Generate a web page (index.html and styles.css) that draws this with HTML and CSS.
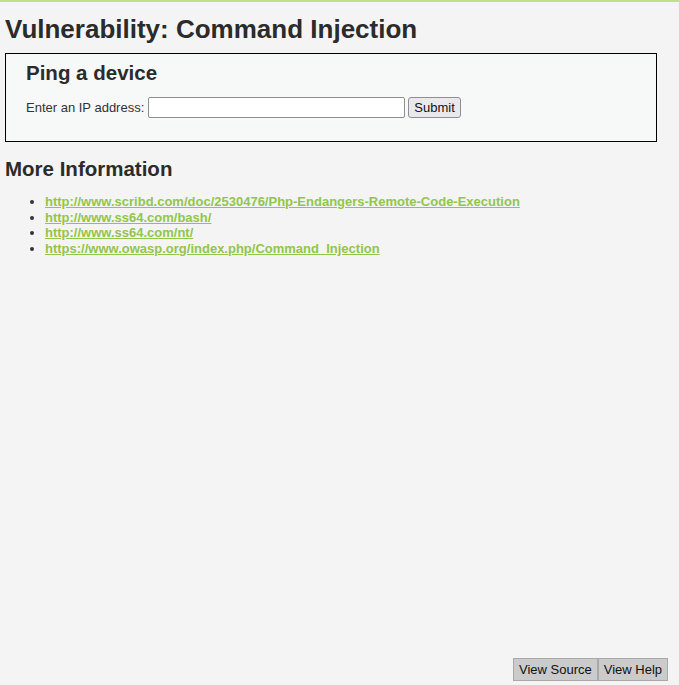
FILE: index.html
```html
<!DOCTYPE html>
<html>
<head>
<meta charset="utf-8">
<link rel="stylesheet" href="styles.css">
</head>
<body>
<div class="topbar"></div>
<div class="page">
  <h1 class="title">Vulnerability: Command Injection</h1>
  <div class="vulnerable_code_area">
    <h2 class="box-title">Ping a device</h2>
    <form class="ping-form">
      <label class="lbl">Enter an IP address:</label>
      <input class="ip-input" type="text" name="ip">
      <button class="submit-btn" type="button">Submit</button>
    </form>
  </div>
  <h2 class="more-title">More Information</h2>
  <ul class="links">
    <li><a href="#">http://www.scribd.com/doc/2530476/Php-Endangers-Remote-Code-Execution</a></li>
    <li><a href="#">http://www.ss64.com/bash/</a></li>
    <li><a href="#">http://www.ss64.com/nt/</a></li>
    <li><a href="#">https://www.owasp.org/index.php/Command_Injection</a></li>
  </ul>
</div>
<div class="footer-buttons">
  <button class="popup-btn" type="button">View Source</button><button class="popup-btn" type="button">View Help</button>
</div>
</body>
</html>
```
FILE: styles.css
```css
html, body {
  margin: 0;
  padding: 0;
}
body {
  background: #f4f4f4;
  font-family: "Liberation Sans", Arial, sans-serif;
  color: #2f2f2f;
  height: 685px;
  position: relative;
  overflow: hidden;
}
.topbar {
  height: 2px;
  background: #c3df86;
}
.page {
  padding: 0 5px;
}
.title {
  margin: 12px 0 0 0;
  font-size: 26px;
  line-height: 30px;
  font-weight: bold;
  color: #2b2b2b;
}
.vulnerable_code_area {
  margin-top: 9px;
  width: 610px;
  border: 1px solid #000;
  background: #f7f8f8;
  padding: 6px 20px 22px 20px;
  height: 59px;
}
.box-title {
  margin: 0;
  font-size: 20.5px;
  line-height: 25px;
  color: #2b2b2b;
}
.ping-form {
  margin-top: 12px;
  display: flex;
  align-items: center;
  font-size: 13px;
}
.lbl {
  color: #333;
  margin-right: 4px;
}
.ip-input {
  width: 251px;
  height: 17px;
  border: 1px solid #8f8f8f;
  border-radius: 2px;
  background: #fff;
  padding: 1px 2px;
  margin: 0 3px 0 0;
}
.submit-btn {
  font-family: "Liberation Sans", Arial, sans-serif;
  font-size: 13px;
  height: 21px;
  padding: 0 5px;
  border: 1px solid #8f8f8f;
  border-radius: 3px;
  background: #e9e9ed;
  color: #111;
}
.more-title {
  margin: 15px 0 0 0;
  font-size: 20.5px;
  line-height: 24px;
  color: #2b2b2b;
}
.links {
  margin: 13px 0 0 0;
  padding-left: 40px;
  font-size: 13px;
  line-height: 15.7px;
}
.links li {
  color: #333;
}
.links a {
  color: #93c54b;
  font-weight: bold;
  text-decoration: underline;
}
.footer-buttons {
  position: absolute;
  right: 11px;
  bottom: 4px;
  display: flex;
}
.popup-btn {
  font-family: "Liberation Sans", Arial, sans-serif;
  font-size: 13px;
  height: 23px;
  padding: 0 5px;
  background: #cbcbcb;
  border: 1px solid #a9a9a9;
  color: #111;
  margin: 0;
}
```
